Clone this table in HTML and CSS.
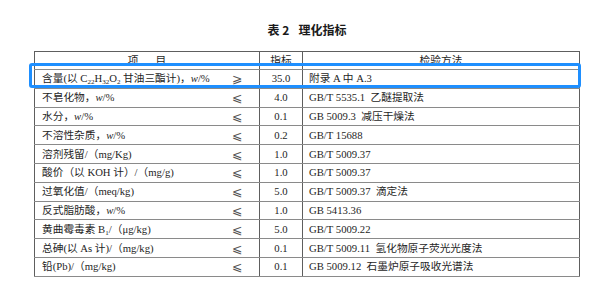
FILE: index.html
```html
<!DOCTYPE html>
<html lang="zh-CN">
<head>
<meta charset="utf-8">
<title>表 2 理化指标</title>
<link rel="stylesheet" href="styles.css">
</head>
<body>
<div class="page">
  <h1 class="title"><span class="title-no">表 2</span><span>理化指标</span></h1>
  <div class="wrap">
    <table class="spec">
      <colgroup>
        <col class="c-item"><col class="c-op"><col class="c-val"><col class="c-method">
      </colgroup>
      <thead>
        <tr><th colspan="2"><span class="gap">项</span>目</th><th>指标</th><th>检验方法</th></tr>
      </thead>
      <tbody>
        <tr><td class="item">含量(以 C<sub>22</sub>H<sub>32</sub>O<sub>2</sub> 甘油三酯计)，<i>w</i>/%</td><td class="op">⩾</td><td class="val">35.0</td><td class="method">附录 A 中 A.3</td></tr>
        <tr><td class="item">不皂化物，<i>w</i>/%</td><td class="op">⩽</td><td class="val">4.0</td><td class="method">GB/T 5535.1&nbsp; 乙醚提取法</td></tr>
        <tr><td class="item">水分，<i>w</i>/%</td><td class="op">⩽</td><td class="val">0.1</td><td class="method">GB 5009.3&nbsp; 减压干燥法</td></tr>
        <tr><td class="item">不溶性杂质，<i>w</i>/%</td><td class="op">⩽</td><td class="val">0.2</td><td class="method">GB/T 15688</td></tr>
        <tr><td class="item">溶剂残留/（mg/Kg)</td><td class="op">⩽</td><td class="val">1.0</td><td class="method">GB/T 5009.37</td></tr>
        <tr><td class="item">酸价（以 KOH 计）/（mg/g)</td><td class="op">⩽</td><td class="val">1.0</td><td class="method">GB/T 5009.37</td></tr>
        <tr><td class="item">过氧化值/（meq/kg)</td><td class="op">⩽</td><td class="val">5.0</td><td class="method">GB/T 5009.37&nbsp; 滴定法</td></tr>
        <tr><td class="item">反式脂肪酸，<i>w</i>/%</td><td class="op">⩽</td><td class="val">1.0</td><td class="method">GB 5413.36</td></tr>
        <tr><td class="item">黄曲霉毒素 B<sub>1</sub>/（μg/kg)</td><td class="op">⩽</td><td class="val">5.0</td><td class="method">GB/T 5009.22</td></tr>
        <tr><td class="item">总砷(以 As 计)/（mg/kg)</td><td class="op">⩽</td><td class="val">0.1</td><td class="method">GB/T 5009.11&nbsp; 氢化物原子荧光光度法</td></tr>
        <tr><td class="item">铅(Pb)/（mg/kg)</td><td class="op">⩽</td><td class="val">0.1</td><td class="method">GB 5009.12&nbsp; 石墨炉原子吸收光谱法</td></tr>
      </tbody>
    </table>
    <div class="highlight"></div>
  </div>
</div>
</body>
</html>
```

FILE: styles.css
```css
html, body {
  margin: 0;
  padding: 0;
  background: #ffffff;
}

.page {
  width: 600px;
  height: 287px;
  overflow: hidden;
  padding-top: 23px;
  box-sizing: border-box;
  color: #1e1e1e;
  font-family: "Liberation Serif", "Noto Sans CJK SC", serif;
}

.title {
  margin: 0 0 0 34px;
  width: 546px;
  text-align: center;
  font-family: "Noto Sans CJK SC", sans-serif;
  font-size: 12px;
  line-height: 14px;
  font-weight: 700;
  color: #1a1a1a;
}

.title-no {
  margin-right: 9px;
}

.wrap {
  position: relative;
  margin: 14px 0 0 34px;
  width: 546px;
}

.spec {
  border-collapse: collapse;
  table-layout: fixed;
  width: 546px;
  font-size: 10.7px;
  line-height: 13px;
  border: 1px solid #5e5e5e;
}

.c-item { width: 181px; }
.c-op { width: 44px; }
.c-val { width: 43px; }
.c-method { width: auto; }

.spec th {
  height: 17px;
  padding: 0;
  font-weight: 400;
  text-align: center;
  vertical-align: middle;
  border-bottom: 1px solid #8a8a8a;
  border-left: 1px solid #5e5e5e;
}

.spec td {
  height: 17.8px;
  padding: 0;
  vertical-align: middle;
  white-space: nowrap;
  border-top: 1px solid #8a8a8a;
  border-bottom: 1px solid #8a8a8a;
}

.gap {
  margin-right: 17px;
}

.item {
  padding-left: 7px !important;
}

.op {
  text-align: center;
  font-family: "DejaVu Sans", sans-serif;
  font-size: 12.5px;
  line-height: 13px;
  color: #555555;
}

.val {
  text-align: center;
  border-left: 1px solid #5e5e5e;
  border-right: 1px solid #5e5e5e;
}

.method {
  padding-left: 6px !important;
}

.spec sub {
  font-size: 7px;
  vertical-align: -2px;
  line-height: 0;
}

.spec i {
  font-style: italic;
}

.highlight {
  position: absolute;
  left: -5px;
  top: 12px;
  width: 552px;
  height: 25px;
  box-sizing: border-box;
  border: 3px solid #1e8fff;
  border-radius: 3px;
  pointer-events: none;
}
```
